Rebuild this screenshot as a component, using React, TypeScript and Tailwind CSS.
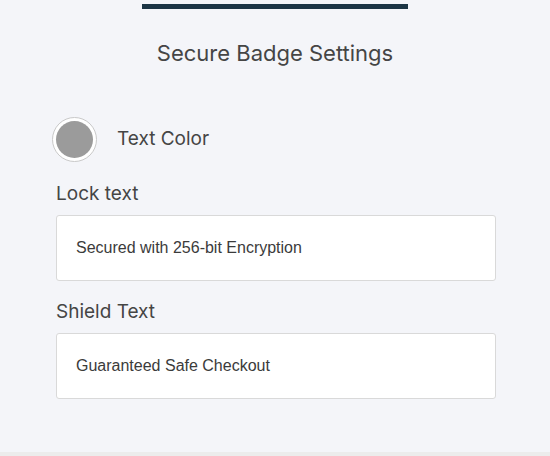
export default function App() {
    return (
        <div className="flex h-[456px] w-[550px] flex-col bg-[#f4f5f9]" style={{ fontFamily: "Inter, 'Liberation Sans', sans-serif" }}>
            <div className="flex flex-1 flex-col">
                <div className="mt-[4px] flex justify-center">
                    <div className="h-[5px] w-[266px] bg-[#1c3545]" />
                </div>

                <h1 className="mt-[28px] text-center text-[22px] leading-[32px] text-[#454545]">
                    Secure Badge Settings
                </h1>

                <div className="flex flex-col pl-[56px] pr-[54px]">
                    <div className="mt-[48px] flex items-center gap-[20px] -ml-[4px]">
                        <div className="flex h-[45px] w-[45px] items-center justify-center rounded-full border border-[#c9c9c9] bg-white">
                            <div className="h-[37px] w-[37px] rounded-full bg-[#9b9b9b]" />
                        </div>
                        <span className="text-[19px] text-[#454545]">Text Color</span>
                    </div>

                    <label className="mt-[18px] text-[19px] leading-[28px] text-[#454545]">Lock text</label>
                    <div className="mt-[7px] flex h-[66px] items-center rounded-[3px] border border-[#d9d9d9] bg-white px-[19px]">
                        <span className="text-[16px] text-[#3b3b3b]" style={{ fontFamily: "'Liberation Sans', Arial, sans-serif" }}>
                            Secured with 256-bit Encryption
                        </span>
                    </div>

                    <label className="mt-[17px] text-[19px] leading-[28px] text-[#454545]">Shield Text</label>
                    <div className="mt-[7px] flex h-[66px] items-center rounded-[3px] border border-[#d9d9d9] bg-white px-[19px]">
                        <span className="text-[16px] text-[#3b3b3b]" style={{ fontFamily: "'Liberation Sans', Arial, sans-serif" }}>
                            Guaranteed Safe Checkout
                        </span>
                    </div>
                </div>
            </div>
            <div className="h-[4px] bg-[#ececec]" />
        </div>
    );
}
